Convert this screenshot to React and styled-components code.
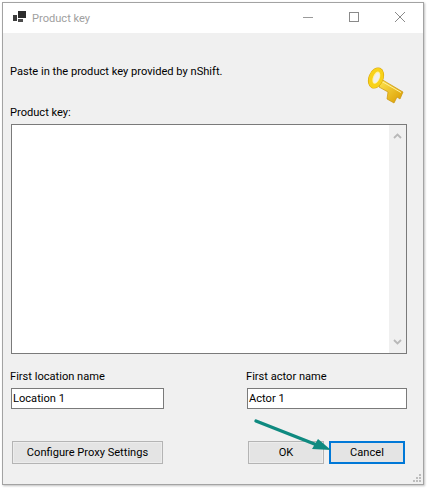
import React from "react";
import styled, { createGlobalStyle } from "styled-components";

const Global = createGlobalStyle`
  html, body { margin: 0; padding: 0; background: #fff; }
  body { width: 427px; height: 488px; overflow: hidden; font-family: "Roboto", "Lato", sans-serif; }
  * { box-sizing: border-box; }
`;

const Page = styled.div`
  position: relative;
  width: 427px;
  height: 488px;
  padding: 2px 3px 3px 2px;
`;

const Win = styled.div`
  height: 100%;
  border: 1px solid #a3a3a3;
  box-shadow: 1px 1px 2px rgba(0,0,0,.25);
  background: #f0f0f0;
  display: flex;
  flex-direction: column;
`;

const TitleBar = styled.div`
  height: 30px;
  background: #fff;
  display: flex;
  align-items: center;
  padding-left: 10px;
  flex: none;
`;

const AppIcon = styled.svg`
  width: 13px;
  height: 12px;
  margin: -3px 6px 0 0;
  flex: none;
`;

const Title = styled.div`
  font-size: 11.1px;
  color: #a0a0a0;
  flex: 1;
`;

const WinButton = styled.div`
  width: 46px;
  height: 30px;
  display: flex;
  align-items: center;
  justify-content: center;
  padding-bottom: 2px;
`;

const Body = styled.div`
  flex: 1;
  display: flex;
  flex-direction: column;
  padding: 0 16px 0 8px;
`;

const Header = styled.div`
  display: flex;
  justify-content: space-between;
  height: 72px;
  align-items: flex-start;
`;

const Label = styled.div`
  font-size: 11.1px;
  line-height: 16px;
  color: #000;
  white-space: nowrap;
  margin-left: -1px;
`;

const Intro = styled(Label)`
  margin-top: 31px;
`;

const KeyIcon = styled.svg`
  width: 40px;
  height: 40px;
  margin: 32px 2px 0 0;
  flex: none;
`;

const TextArea = styled.div`
  margin-top: 3px;
  height: 230px;
  border: 1px solid #7a7a7a;
  background: #fff;
  display: flex;
  justify-content: flex-end;
`;

const ScrollBar = styled.div`
  width: 17px;
  background: #f0f0f0;
  display: flex;
  flex-direction: column;
  justify-content: space-between;
  align-items: center;
  padding: 8px 0;
`;

const Fields = styled.div`
  display: flex;
  justify-content: space-between;
  margin-top: 15px;
`;

const Field = styled.div`
  width: ${(p) => p.$width}px;
  display: flex;
  flex-direction: column;
  gap: 3px;
`;

const Input = styled.div`
  height: 21px;
  border: 1px solid #7a7a7a;
  background: #fff;
  font-size: 11.1px;
  line-height: 19px;
  padding-left: 1px;
  color: #000;
`;

const Buttons = styled.div`
  display: flex;
  align-items: center;
  margin-top: 32px;
  padding-left: 1px;
`;

const Button = styled.div`
  width: ${(p) => p.$width}px;
  height: 23px;
  margin-left: ${(p) => p.$ml || 0}px;
  border: ${(p) => (p.$focus ? "2px solid #0078d7" : "1px solid #b4b4b4")};
  background: #e4e4e4;
  box-shadow: ${(p) => (p.$focus ? "none" : "inset 0 0 0 1px #ececec")};
  display: flex;
  align-items: center;
  justify-content: center;
  font-size: 11.1px;
  color: #000;
`;

const Arrow = styled.svg`
  position: absolute;
  left: 250px;
  top: 415px;
  width: 85px;
  height: 40px;
`;

const Grip = styled.svg`
  position: absolute;
  right: 6px;
  bottom: 6px;
  width: 8px;
  height: 8px;
`;

export default function App() {
  return (
    <Page>
      <Global />
      <Win>
        <TitleBar>
          <AppIcon viewBox="0 0 13 12">
            <rect x="0" y="4" width="4" height="6" fill="#3c3c3c" />
            <rect x="5" y="0" width="8" height="7" fill="#2c2c2c" />
            <rect x="5" y="8" width="5" height="3" fill="#4c4c4c" />
          </AppIcon>
          <Title>Product key</Title>
          <WinButton>
            <svg width="10" height="10" viewBox="0 0 10 10"><path d="M0 5.5H10" stroke="#9a9a9a" /></svg>
          </WinButton>
          <WinButton>
            <svg width="10" height="10" viewBox="0 0 10 10"><rect x=".5" y=".5" width="9" height="9" fill="none" stroke="#8a8a8a" /></svg>
          </WinButton>
          <WinButton>
            <svg width="10" height="10" viewBox="0 0 10 10"><path d="M0 0L10 10M10 0L0 10" stroke="#8a8a8a" /></svg>
          </WinButton>
        </TitleBar>
        <Body>
          <Header>
            <Intro>Paste in the product key provided by nShift.</Intro>
            <KeyIcon viewBox="0 0 40 40">
              <defs>
                <linearGradient id="kg" x1="0" y1="0" x2="1" y2="1">
                  <stop offset="0" stopColor="#ffe650" />
                  <stop offset="1" stopColor="#d99a00" />
                </linearGradient>
              </defs>
              <path d="M16 14L38 27L35 34L32 32L29 38L22 34L23 27L14 22Z" fill="url(#kg)" stroke="#c9940c" strokeWidth=".7" />
              <path d="M17 16.5L36 27.5" stroke="#fff09a" strokeWidth="1" />
              <ellipse cx="11" cy="13" rx="7.5" ry="11" transform="rotate(22 11 13)" fill="#d9a50c" />
              <ellipse cx="11" cy="13" rx="7" ry="10.4" transform="rotate(22 11 13)" fill="#f8d21a" />
              <ellipse cx="11.2" cy="12.6" rx="3.4" ry="6.4" transform="rotate(22 11 13)" fill="#fff2a6" />
              <ellipse cx="11.4" cy="12.8" rx="2.4" ry="5.2" transform="rotate(22 11 13)" fill="#f0f0f0" />
            </KeyIcon>
          </Header>
          <Label>Product key:</Label>
          <TextArea>
            <ScrollBar>
              <svg width="9" height="6" viewBox="0 0 9 6"><path d="M1 5L4.5 1.5L8 5" fill="none" stroke="#b8b8b8" strokeWidth="1.8" /></svg>
              <svg width="9" height="6" viewBox="0 0 9 6"><path d="M1 1L4.5 4.5L8 1" fill="none" stroke="#b8b8b8" strokeWidth="1.8" /></svg>
            </ScrollBar>
          </TextArea>
          <Fields>
            <Field $width={153}>
              <Label>First location name</Label>
              <Input>Location 1</Input>
            </Field>
            <Field $width={160}>
              <Label>First actor name</Label>
              <Input>Actor 1</Input>
            </Field>
          </Fields>
          <Buttons>
            <Button $width={151}>Configure Proxy Settings</Button>
            <Button $width={76} $ml={85}>OK</Button>
            <Button $width={76} $ml={5} $focus>Cancel</Button>
          </Buttons>
        </Body>
      </Win>
      <Arrow viewBox="0 0 85 40">
        <path d="M6 6L67 30" stroke="#0f8a80" strokeWidth="3.4" strokeLinecap="round" />
        <path d="M68 24L81 35L62 34Z" fill="#0f8a80" />
      </Arrow>
      <Grip viewBox="0 0 8 8">
        <path d="M6 0h2v2H6zM3 3h2v2H3zM6 3h2v2H6zM0 6h2v2H0zM3 6h2v2H3zM6 6h2v2H6z" fill="#bdbdbd" />
      </Grip>
    </Page>
  );
}
